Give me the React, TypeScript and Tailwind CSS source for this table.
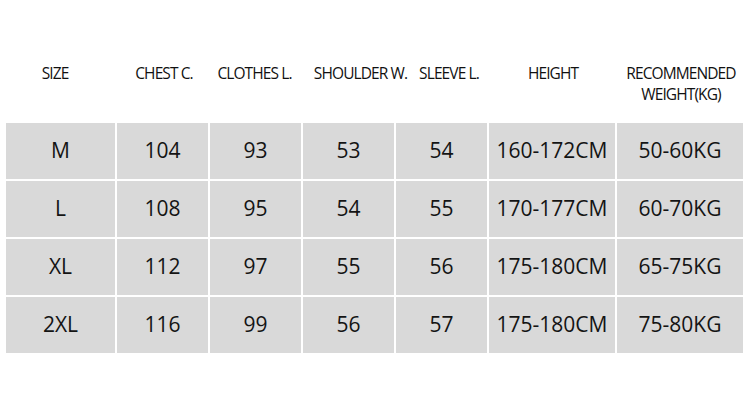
import React from "react";

const headers: { label: React.ReactNode; pad: string }[] = [
  { label: "SIZE", pad: "pr-[11px]" },
  { label: "CHEST C.", pad: "pl-[3px]" },
  { label: "CLOTHES L.", pad: "pr-[2px]" },
  { label: "SHOULDER W.", pad: "pl-[24px]" },
  { label: "SLEEVE L.", pad: "pl-[15px]" },
  { label: "HEIGHT", pad: "pl-[2px]" },
  { label: (<>RECOMMENDED<br />WEIGHT(KG)</>), pad: "pl-[2px]" },
];

const rows = [
  ["M", "104", "93", "53", "54", "160-172CM", "50-60KG"],
  ["L", "108", "95", "54", "55", "170-177CM", "60-70KG"],
  ["XL", "112", "97", "55", "56", "175-180CM", "65-75KG"],
  ["2XL", "116", "99", "56", "57", "175-180CM", "75-80KG"],
];

export default function App() {
  return (
    <div className="w-[750px] h-[400px] bg-white text-[#1a1a1a] pl-[6px] pt-[63px]" style={{ fontFamily: '"Open Sans", "Noto Sans", sans-serif' }}>
      <div className="grid grid-cols-[109px_91px_91px_91px_91px_126px_126px] gap-x-[2px] h-[60px] text-[15.5px] leading-[21px] tracking-[-0.9px] text-[#111]">
        {headers.map((h, i) => (
          <div key={i} className={`flex justify-center whitespace-nowrap text-center ${h.pad}`}>
            <span>{h.label}</span>
          </div>
        ))}
      </div>
      <div className="grid grid-cols-[109px_91px_91px_91px_91px_126px_126px] grid-rows-[56px_56px_56px_56px] gap-[2px] w-[737px] text-[21px] text-[#141414]">
        {rows.map((r, ri) =>
          r.map((c, ci) => (
            <div key={`${ri}-${ci}`} className="bg-[#d9d9d9] flex items-center justify-center">
              {c}
            </div>
          ))
        )}
      </div>
    </div>
  );
}
